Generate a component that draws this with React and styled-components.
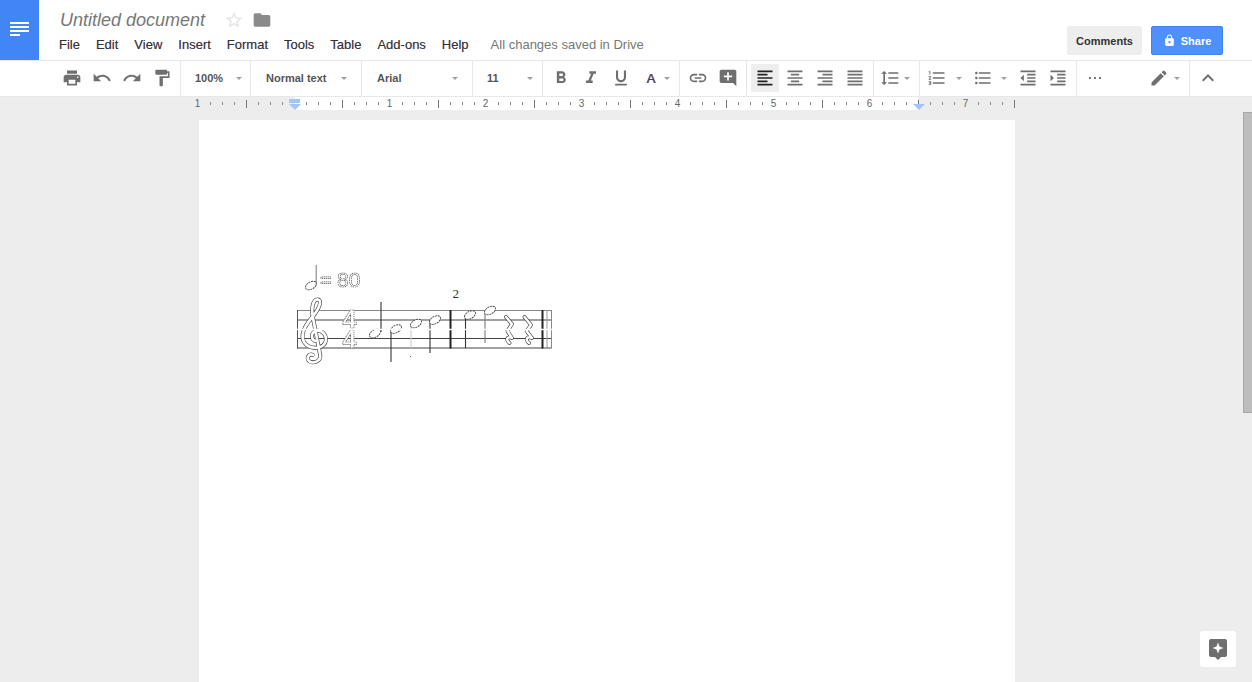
import React from 'react';
import styled, { createGlobalStyle } from 'styled-components';
import {
  MdPrint, MdUndo, MdRedo, MdFormatPaint, MdFormatBold, MdFormatItalic, MdFormatUnderlined,
  MdLink, MdAddComment, MdFormatAlignLeft, MdFormatAlignCenter, MdFormatAlignRight,
  MdFormatAlignJustify, MdFormatLineSpacing, MdFormatListNumbered, MdFormatListBulleted,
  MdFormatIndentDecrease, MdFormatIndentIncrease, MdEdit, MdExpandLess,
  MdLock, MdStarBorder, MdFolder,
} from 'react-icons/md';

const GlobalStyle = createGlobalStyle`
  html, body { margin: 0; padding: 0; height: 100%; overflow: hidden; }
  body { font-family: "Liberation Sans", Arial, sans-serif; background: #ededed; }
`;

const Shell = styled.div`
  display: flex;
  flex-direction: column;
  height: 100vh;
  overflow: hidden;
  position: relative;
`;

const Header = styled.header`
  display: flex;
  height: 60px;
  background: #fff;
  border-bottom: 1px solid #e8e8e8;
  flex: none;
`;

const Logo = styled.div`
  width: 39px;
  background: #4285f4;
  display: flex;
  flex-direction: column;
  gap: 2px;
  padding: 22px 10px 0;
  box-sizing: border-box;
`;

const LogoLine = styled.span`
  display: block;
  height: 2px;
  width: ${props => (props.$short ? '10px' : '19px')};
  background: #fff;
`;

const TitleBlock = styled.div`
  padding-left: 21px;
  display: flex;
  flex-direction: column;
`;

const TitleRow = styled.div`
  display: flex;
  align-items: center;
  height: 24px;
  margin-top: 8px;
`;

const DocTitle = styled.span`
  font-size: 18px;
  font-style: italic;
  color: #777;
  width: 164px;
`;

const StarIcon = styled(MdStarBorder)`
  color: #e4e4e4;
  font-size: 20px;
  margin-right: 8px;
`;

const FolderIcon = styled(MdFolder)`
  color: #8a8a8a;
  font-size: 20px;
`;

const MenuBar = styled.nav`
  display: flex;
  margin-top: 5px;
  margin-left: -1px;
  gap: 16px;
  font-size: 13px;
  line-height: 16px;
  color: #333;
`;

const MenuItem = styled.span`
  text-shadow: -0.3px 0 rgba(0, 0, 190, 0.25), 0.3px 0 rgba(190, 0, 0, 0.2);
`;

const SaveStatus = styled.span`
  color: #777;
  margin-left: 6px;
`;

const Actions = styled.div`
  margin-left: auto;
  padding: 26px 29px 0 0;
  display: flex;
  gap: 9px;
  align-items: flex-start;
`;

const ActionButton = styled.button`
  height: 29px;
  width: ${props => props.$width}px;
  padding: 0;
  box-sizing: border-box;
  font: bold 11px "Liberation Sans", Arial, sans-serif;
  border-radius: 2px;
  display: flex;
  align-items: center;
  justify-content: center;
  gap: 5px;
  color: ${props => (props.$primary ? '#fff' : '#333')};
  background: ${props => (props.$primary ? '#4d90fe' : '#eee')};
  border: 1px solid ${props => (props.$primary ? '#3f83f0' : '#eee')};
`;

const Toolbar = styled.div`
  display: flex;
  height: 36px;
  box-sizing: border-box;
  background: #fff;
  border-bottom: 1px solid #e8e8e8;
  flex: none;
`;

const ToolGroup = styled.div`
  display: flex;
  align-items: center;
  box-sizing: border-box;
  width: ${props => props.$width}px;
  padding: 0 ${props => props.$padRight || 0}px 1px ${props => props.$pad || 0}px;
  border-right: ${props => (props.$last ? 'none' : '1px solid #e8e8e8')};
`;

const IconButton = styled.div`
  width: 28px;
  height: 28px;
  margin: 0 1px 0 ${props => props.$left || 1}px;
  flex: none;
  display: flex;
  align-items: center;
  justify-content: center;
  color: #6f6f6f;
  font-size: ${props => props.$size || 20}px;
  background: ${props => (props.$active ? '#eee' : 'transparent')};
`;

const ActiveIcon = styled.span`
  display: flex;
  color: #222;
`;

const ColorA = styled.span`
  font-size: 13px;
  color: #444;
  text-shadow: -0.5px 0 rgba(0, 0, 220, 0.5), 0.5px 0 rgba(220, 0, 0, 0.5);
`;

const MoreDots = styled.span`
  display: flex;
  gap: 2.5px;
`;

const MoreDot = styled.span`
  width: 2.5px;
  height: 2.5px;
  background: #777;
`;

const Caret = styled.span`
  flex: none;
  width: 0;
  height: 0;
  border-left: 3px solid transparent;
  border-right: 3px solid transparent;
  border-top: 3px solid #a0a0a0;
  margin-left: ${props => props.$left || 0}px;
  margin-right: ${props => props.$right || 0}px;
`;

const Dropdown = styled.span`
  flex: 1;
  font-size: 11px;
  font-weight: bold;
  color: #555;
`;

const Ruler = styled.div`
  display: flex;
  height: 13px;
  flex: none;
  padding-left: 192px;
  position: relative;
  background: linear-gradient(to right, #ededed 295px, #fff 295px, #fff 918px, #ededed 918px);
`;

const RulerCell = styled.div`
  width: 12px;
  flex: none;
  display: flex;
  align-items: center;
  justify-content: center;
`;

const RulerNumber = styled.span`
  font-size: 10px;
  line-height: 13px;
  color: #666;
  margin-left: -1px;
`;

const RulerTick = styled.span`
  display: block;
  width: 1px;
  height: ${props => (props.$major ? 8 : 3)}px;
  background: ${props => (props.$major ? '#777' : '#888')};
  margin-left: 1px;
`;

const MarginBar = styled.span`
  position: absolute;
  left: 289px;
  top: 2px;
  width: 11px;
  height: 4px;
  background: #a3c4f9;
`;

const MarginArrow = styled.span`
  position: absolute;
  left: ${props => props.$left}px;
  top: 7px;
  width: 0;
  height: 0;
  border-left: 6px solid transparent;
  border-right: 6px solid transparent;
  border-top: 6px solid #a3c4f9;
`;

const Workspace = styled.div`
  flex: 1;
  min-height: 0;
  display: flex;
`;

const Canvas = styled.main`
  flex: 1;
  padding: 10px 0 0 199px;
  overflow: hidden;
`;

const Page = styled.div`
  width: 816px;
  height: 700px;
  background: #fff;
  box-sizing: border-box;
  padding: 135px 0 0 86px;
`;

const ScoreImage = styled.svg`
  display: block;
`;

const ScoreDigits = styled.g`
  font-family: "Liberation Sans", Arial, sans-serif;
  font-weight: ${props => (props.$bold ? 'bold' : 'normal')};
  fill: #fff;
  stroke: #555;
  stroke-width: 0.7;
  stroke-dasharray: 1.4 0.6;
  filter: grayscale(1);
`;

const ScrollTrack = styled.div`
  width: 9px;
  padding-top: 2px;
`;

const ScrollThumb = styled.div`
  height: 301px;
  box-sizing: border-box;
  background: #bdbdbd;
  border: 1px solid #a8a8a8;
  border-right: none;
`;

const AssistButton = styled.div`
  position: absolute;
  right: 16px;
  bottom: 15px;
  width: 36px;
  height: 36px;
  border-radius: 3px;
  background: #fff;
  display: flex;
  align-items: center;
  justify-content: center;
`;

const noteHeads = [
  { x: 375, y: 333.5, stem: [381, 302, 332] },
  { x: 396, y: 329, stem: [391, 329, 362] },
  { x: 416, y: 323.5, stem: [411, 325, 348], faint: true },
  { x: 435, y: 320, stem: [430, 321, 353] },
  { x: 470, y: 315, stem: [465.5, 316, 348] },
  { x: 490, y: 310.5, stem: [485, 313, 343], soft: true },
];

const StaffLine = ({ y, dark }) => (
  <line x1="297" x2="551" y1={y} y2={y} stroke={dark ? '#444' : '#888'} strokeWidth={dark ? 1.2 : 1.1} />
);

const Outlined = ({ d, outer = 4, inner = 2.7 }) => (
  <>
    <path d={d} fill="none" stroke="#444" strokeWidth={outer} strokeLinecap="round" strokeLinejoin="round" strokeDasharray="3 0.6" />
    <path d={d} fill="none" stroke="#fff" strokeWidth={inner} strokeLinecap="round" strokeLinejoin="round" />
  </>
);

const NoteHead = ({ x, y }) => (
  <ellipse
    cx={x}
    cy={y}
    rx="6"
    ry="3.6"
    transform={`rotate(-30 ${x} ${y})`}
    fill="#fff"
    stroke="#444"
    strokeWidth="0.9"
    strokeDasharray="2 0.7"
  />
);

const Score = () => (
  <ScoreImage width="280" height="115" viewBox="285 255 280 115">
    <ScoreDigits>
      <text x="320" y="287" fontSize="20">=</text>
      <text x="337" y="287" fontSize="21">80</text>
    </ScoreDigits>
    <NoteHead x={311} y={285.5} />
    <line x1="316.2" x2="316.2" y1="265" y2="285" stroke="#777" strokeWidth="1" />
    <text x="452.5" y="298" fontFamily="'Liberation Serif', serif" fontSize="13" fill="#333">2</text>

    <StaffLine y={310.5} />
    <StaffLine y={320} dark />
    <StaffLine y={338.5} dark />
    <StaffLine y={348} dark />
    <line x1="297.5" x2="297.5" y1="310" y2="348.5" stroke="#555" strokeWidth="1" />
    <line x1="450.5" x2="450.5" y1="310" y2="348.5" stroke="#222" strokeWidth="2" />
    <line x1="542.5" x2="542.5" y1="310" y2="348.5" stroke="#222" strokeWidth="2" />
    <line x1="547" x2="547" y1="310" y2="348.5" stroke="#999" strokeWidth="1" />
    <line x1="551.5" x2="551.5" y1="310" y2="348.5" stroke="#888" strokeWidth="1" />

    <Outlined d="M316 341 C311 340 310 333 316 331 C323 329 328 337 325 343 C322 349 309 350 304 342 C299 333 308 322 314 315 C320 307 322 300 318 299.5 C313 299 311 308 313 318 L320 354 C322 362 312 364 309 361 C306 358 309 353 313 355" />
    <ScoreDigits $bold>
      <text x="342.5" y="328" fontSize="25">4</text>
      <text x="342.5" y="348" fontSize="25">4</text>
    </ScoreDigits>

    {noteHeads.map(n => (
      <line
        key={n.x}
        x1={n.stem[0]}
        x2={n.stem[0]}
        y1={n.stem[1]}
        y2={n.stem[2]}
        stroke={n.faint ? '#ccc' : n.soft ? '#777' : '#333'}
        strokeWidth="1.1"
      />
    ))}
    {noteHeads.map(n => <NoteHead key={n.x} x={n.x} y={n.y} />)}
    <rect x="410" y="356" width="1" height="1" fill="#666" />

    <Outlined d="M506 317 L512 324 L507.5 331 L512 338 C508 336 505 339 509.5 343" outer={3.8} inner={2.4} />
    <Outlined d="M524.5 317 L531 325 L526.5 331 L532 338 C527.5 336 524.5 339 529 343" outer={3.8} inner={2.4} />
    <line x1="297" x2="552" y1="329.5" y2="329.5" stroke="#fff" strokeWidth="1.5" />
  </ScoreImage>
);

const AssistIcon = () => (
  <svg width="18" height="21" viewBox="0 0 18 21">
    <path d="M2 0h14a2 2 0 0 1 2 2v14a2 2 0 0 1-2 2h-4l-3 3-3-3H2a2 2 0 0 1-2-2V2a2 2 0 0 1 2-2z" fill="#6f6f6f" />
    <path d="M9 3.5l1.5 4 4 1.5-4 1.5-1.5 4-1.5-4-4-1.5 4-1.5z" fill="#fff" />
  </svg>
);

const menus = ['File', 'Edit', 'View', 'Insert', 'Format', 'Tools', 'Table', 'Add-ons', 'Help'];

// ruler runs from the 1 left of the margin to the right page edge, 8 cells per inch
const rulerCells = Array.from({ length: 69 }, (_, i) => i);
const rulerLabels = { 0: '1', 16: '1', 24: '2', 32: '3', 40: '4', 48: '5', 56: '6', 64: '7' };
const MARGIN_CELL = 8;

const App = () => (
  <Shell>
    <GlobalStyle />
    <Header>
      <Logo>
        <LogoLine />
        <LogoLine />
        <LogoLine />
        <LogoLine $short />
      </Logo>
      <TitleBlock>
        <TitleRow>
          <DocTitle>Untitled document</DocTitle>
          <StarIcon />
          <FolderIcon />
        </TitleRow>
        <MenuBar>
          {menus.map(m => <MenuItem key={m}>{m}</MenuItem>)}
          <SaveStatus>All changes saved in Drive</SaveStatus>
        </MenuBar>
      </TitleBlock>
      <Actions>
        <ActionButton $width={75}>Comments</ActionButton>
        <ActionButton $width={72} $primary><MdLock size={13} />Share</ActionButton>
      </Actions>
    </Header>

    <Toolbar>
      <ToolGroup $width={181} $pad={57}>
        <IconButton><MdPrint /></IconButton>
        <IconButton><MdUndo /></IconButton>
        <IconButton><MdRedo /></IconButton>
        <IconButton><MdFormatPaint /></IconButton>
      </ToolGroup>
      <ToolGroup $width={70} $pad={14} $padRight={8}>
        <Dropdown>100%</Dropdown><Caret />
      </ToolGroup>
      <ToolGroup $width={111} $pad={15} $padRight={14}>
        <Dropdown>Normal text</Dropdown><Caret />
      </ToolGroup>
      <ToolGroup $width={111} $pad={15} $padRight={14}>
        <Dropdown>Arial</Dropdown><Caret />
      </ToolGroup>
      <ToolGroup $width={70} $pad={14} $padRight={9}>
        <Dropdown>11</Dropdown><Caret />
      </ToolGroup>
      <ToolGroup $width={137} $pad={3}>
        <IconButton><MdFormatBold /></IconButton>
        <IconButton><MdFormatItalic /></IconButton>
        <IconButton><MdFormatUnderlined /></IconButton>
        <IconButton><ColorA>A</ColorA></IconButton>
        <Caret $left={-2} />
      </ToolGroup>
      <ToolGroup $width={67} $pad={3}>
        <IconButton><MdLink /></IconButton>
        <IconButton><MdAddComment /></IconButton>
      </ToolGroup>
      <ToolGroup $width={127} $pad={3}>
        <IconButton $active><ActiveIcon><MdFormatAlignLeft /></ActiveIcon></IconButton>
        <IconButton><MdFormatAlignCenter /></IconButton>
        <IconButton><MdFormatAlignRight /></IconButton>
        <IconButton><MdFormatAlignJustify /></IconButton>
      </ToolGroup>
      <ToolGroup $width={46} $pad={1}>
        <IconButton><MdFormatLineSpacing /></IconButton>
        <Caret $left={-1} />
      </ToolGroup>
      <ToolGroup $width={157} $pad={2}>
        <IconButton><MdFormatListNumbered /></IconButton>
        <Caret $left={4} $right={6} />
        <IconButton><MdFormatListBulleted /></IconButton>
        <Caret $left={3} $right={6} />
        <IconButton><MdFormatIndentDecrease /></IconButton>
        <IconButton><MdFormatIndentIncrease /></IconButton>
      </ToolGroup>
      <ToolGroup $width={113} $pad={3}>
        <IconButton>
          <MoreDots><MoreDot /><MoreDot /><MoreDot /></MoreDots>
        </IconButton>
        <IconButton $left={35}><MdEdit /></IconButton>
        <Caret />
      </ToolGroup>
      <ToolGroup $width={62} $pad={3} $last>
        <IconButton $size={24}><MdExpandLess /></IconButton>
      </ToolGroup>
    </Toolbar>

    <Ruler>
      {rulerCells.map(i => (
        <RulerCell key={i}>
          {rulerLabels[i] && <RulerNumber>{rulerLabels[i]}</RulerNumber>}
          {!rulerLabels[i] && i !== MARGIN_CELL && <RulerTick $major={i % 4 === 0} />}
        </RulerCell>
      ))}
      <MarginBar />
      <MarginArrow $left={289} />
      <MarginArrow $left={913} />
    </Ruler>

    <Workspace>
      <Canvas>
        <Page>
          <Score />
        </Page>
      </Canvas>
      <ScrollTrack>
        <ScrollThumb />
      </ScrollTrack>
    </Workspace>

    <AssistButton><AssistIcon /></AssistButton>
  </Shell>
);

export default App;
